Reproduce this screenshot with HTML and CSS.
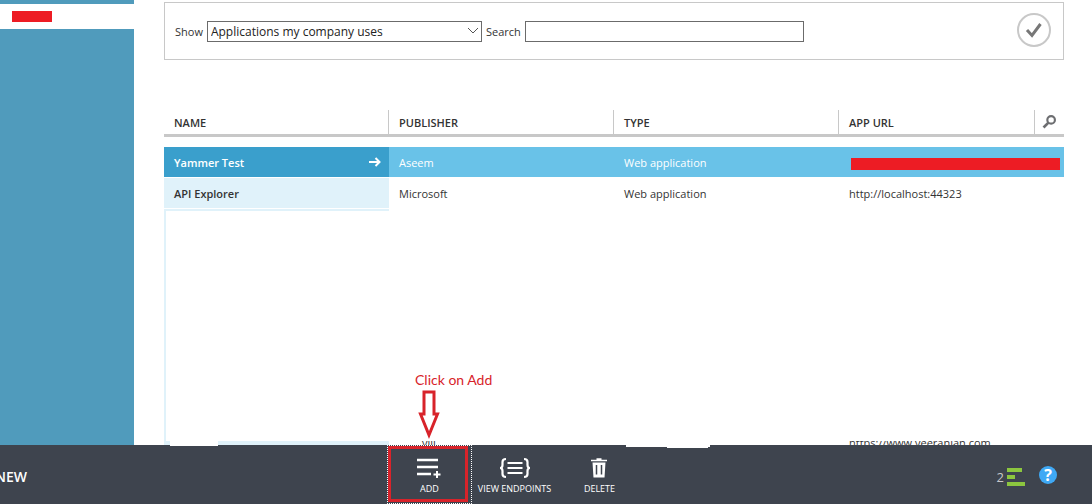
FILE: index.html
```html
<!DOCTYPE html>
<html lang="en">
<head>
  <meta charset="UTF-8">
  <title>Applications</title>
  <link rel="stylesheet" href="styles.css">
</head>
<body>
  <div class="workspace">
    <nav class="sidebar">
      <a href="#" class="sidebar-item" aria-label="Directory"><span class="redacted"></span></a>
    </nav>

    <main class="content">
      <form class="filter">
        <label for="show">Show</label>
        <div class="select-wrap">
          <select id="show">
            <option>Applications my company uses</option>
          </select>
          <svg class="chevron" viewBox="0 0 12 8"><path d="M1 1l5 5 5-5"/></svg>
        </div>
        <label for="search">Search</label>
        <input type="text" id="search">
        <button type="button" class="apply" aria-label="Apply">
          <svg viewBox="0 0 34 34">
            <circle cx="17" cy="17" r="16"/>
            <path d="M10 17l5 5.500 8.500-11.500"/>
          </svg>
        </button>
      </form>

      <table class="apps">
        <thead>
          <tr>
            <th>NAME</th>
            <th>PUBLISHER</th>
            <th>TYPE</th>
            <th>APP URL</th>
            <th class="find">
              <button type="button" aria-label="Find">
                <svg viewBox="0 0 12 12"><circle cx="7.500" cy="4.500" r="3.500"/><path d="M5 7l-4.500 4.500" stroke-width="2.500"/></svg>
              </button>
            </th>
          </tr>
        </thead>
        <tbody>
          <tr class="selected">
            <td class="name">
              <div class="name-cell">Yammer Test
                <svg viewBox="0 0 12 10"><path d="M0 5h11M6.500 1l4 4-4 4"/></svg>
              </div>
            </td>
            <td>Aseem</td>
            <td>Web application</td>
            <td colspan="2" class="url"><span class="redacted wide"></span></td>
          </tr>
          <tr>
            <td class="name">API Explorer</td>
            <td>Microsoft</td>
            <td>Web application</td>
            <td colspan="2">http://localhost:44323</td>
          </tr>
        </tbody>
      </table>

      <!-- blanked out rows -->
      <div class="blank"></div>
      <div class="last-row">
        <span class="last-name"></span>
        <span class="last-publisher">vill</span>
        <span></span>
        <span>https://www.veeranlan.com</span>
      </div>
    </main>
  </div>

  <footer class="drawer">
    <span class="patch patch-a"></span>
    <span class="patch patch-b"></span>
    <span class="patch patch-c"></span>

    <button type="button" class="new">NEW</button>

    <div class="commands">
      <button type="button" class="command focused">
        <svg viewBox="0 0 24 20">
          <path d="M-1 2h21M-1 9h21M-1 16h14" stroke-width="2.500"/>
          <path d="M15.500 16.500h7M19 13v7" stroke-width="2"/>
        </svg>
        ADD
      </button>
      <button type="button" class="command">
        <svg class="wide-icon" viewBox="0 0 32 20">
          <path d="M7 1q-3.500 0-3.500 3v3q0 3-2.500 3 2.500 0 2.500 3v3q0 3 3.500 3M25 1q3.500 0 3.500 3v3q0 3 2.500 3-2.500 0-2.500 3v3q0 3-3.500 3" stroke-width="2.200"/>
          <path d="M8.500 5h15M8.500 10h15M8.500 15h15" stroke-width="2"/>
        </svg>
        VIEW ENDPOINTS
      </button>
      <button type="button" class="command">
        <svg viewBox="0 0 24 20">
          <path d="M3 2.500h16M8.500 1h5" stroke-width="1.400"/>
          <path d="M4.500 4.500h13l-1 15h-11z" fill="#fff" stroke="none"/>
          <path d="M8.500 7v9.500M13.500 7v9.500" stroke="#3e444e" stroke-width="1.500"/>
        </svg>
        DELETE
      </button>

      <div class="callout">
        <span>Click on Add</span>
        <svg viewBox="0 0 20 48"><path d="M5 2h10v22h3.500L10 45 1.500 24H5z"/></svg>
      </div>
    </div>

    <div class="status">
      <span class="count">2</span>
      <svg class="bars" viewBox="0 0 18 18"><path d="M0 0h15v4H0zM0 7h8v4H0zM0 14h18v4H0z"/></svg>
      <button type="button" class="help" aria-label="Help">?</button>
    </div>
  </footer>
</body>
</html>
```

FILE: styles.css
```css
* { box-sizing: border-box; }
body, html {
  height: 100%;
  margin: 0;
}
body {
  display: flex;
  flex-direction: column;
  overflow: hidden;
  background: #fff;
  color: #333;
  font-family: "Open Sans", "Noto Sans", sans-serif;
  font-size: 11px;
}
button {
  padding: 0;
  border: 0;
  background: none;
  font: inherit;
  color: inherit;
}
svg {
  fill: none;
  stroke: currentColor;
  overflow: visible;
}

.workspace {
  display: flex;
  flex: 1;
  min-height: 0;
}
.sidebar {
  width: 134px;
  padding-top: 4px;
  background: #509bbc;
}
.sidebar-item {
  display: flex;
  align-items: center;
  height: 25px;
  padding-left: 12px;
  background: #fff;
}
.redacted {
  width: 40px;
  height: 11px;
  background: #ed1c24;
}
.content {
  display: flex;
  flex: 1;
  flex-direction: column;
  padding: 2px 28px 0 30px;
}

/* filter bar */
.filter {
  display: flex;
  align-items: center;
  gap: 4px;
  height: 58px;
  padding: 0 12px 0 10px;
  border: 1px solid #c8c8c8;
}
.select-wrap {
  position: relative;
  width: 275px;
}
.filter select,
.filter input {
  display: block;
  height: 21px;
  border: 1px solid #6b6b6b;
  border-radius: 0;
  background: #fff;
  color: #222;
  font-family: inherit;
  font-size: 12px;
}
.filter select {
  width: 100%;
  padding: 0 3px;
  appearance: none;
}
.filter input { width: 279px; }
.chevron {
  position: absolute;
  top: 6px;
  right: 3px;
  width: 12px;
  height: 8px;
  color: #555;
}
.apply {
  width: 34px;
  height: 34px;
  margin: -2px 0 0 auto;
}
.apply svg { display: block; }
.apply circle {
  stroke: #c8c8c8;
  stroke-width: 2;
}
.apply path {
  stroke: #777;
  stroke-width: 3;
}

/* applications */
.apps {
  width: 100%;
  margin-top: 50px;
  border-spacing: 0;
  table-layout: fixed;
}
.apps th {
  height: 27px;
  padding: 0 10px;
  border-right: 1px solid #c8c8c8;
  border-bottom: 3px solid #c8c8c8;
  text-align: left;
  font-weight: 600;
}
.apps th:nth-child(-n+3) { width: 25%; }
.apps .find {
  width: 29px;
  padding: 2px 0 0 8px;
  border-right: 0;
}
.find svg {
  display: block;
  width: 13px;
  height: 13px;
  color: #6d6e71;
  stroke-width: 2;
}
.apps tbody::before {
  content: "";
  display: block;
  height: 10px;
}
.apps td {
  height: 31px;
  padding: 0 10px;
  border-bottom: 1px solid #fff;
  background-clip: padding-box;
}
.apps .name {
  background-color: #e0f2fa;
  font-weight: 600;
}
.selected td {
  background-color: #69c2e8;
  color: #fff;
}
.apps .selected .name { background-color: #3a9fcc; }
.name-cell {
  display: flex;
  align-items: center;
  justify-content: space-between;
}
.name-cell svg {
  width: 12px;
  height: 10px;
  margin-right: -2px;
  stroke-width: 2;
}
.apps .url { padding: 3px 4px 0 12px; }
.redacted.wide {
  display: block;
  width: 100%;
  height: 12px;
}
.blank {
  flex: 1;
  width: 25%;
  border-top: 2px solid #e0f2fa;
  border-left: 2px solid #e0f2fa;
}
.last-row {
  display: grid;
  grid-template: 4px / repeat(4, 1fr);
  height: 4px;
  overflow: hidden;
  line-height: 4px;
}
.last-row span { padding-left: 10px; }
.last-row .last-name { background: #e0f2fa; }
.last-row .last-publisher { padding-left: 33px; }

/* command bar */
.drawer {
  position: relative;
  display: grid;
  grid-template-columns: 387px auto 1fr;
  align-items: center;
  height: 59px;
  background: #3e444e;
  color: #fff;
}
.new {
  justify-self: start;
  margin-left: -5px;
  padding-top: 4px;
  font-size: 14px;
  font-weight: 600;
}
.commands {
  position: relative;
  display: flex;
  height: 100%;
}
.command {
  display: flex;
  flex-direction: column;
  align-items: center;
  gap: 4px;
  width: 85px;
  padding-top: 13px;
  font-size: 9px;
  line-height: 14px;
  white-space: nowrap;
}
.command svg {
  width: 24px;
  height: 20px;
}
.command .wide-icon { width: 32px; }
.focused {
  position: relative;
  outline: 1px dotted #fff;
  outline-offset: -1px;
}
.focused::after {
  content: "";
  position: absolute;
  inset: 1px 4px 2px 1px;
  border: 3px solid #d8232a;
}
.callout {
  position: absolute;
  bottom: 100%;
  left: 28px;
  padding-bottom: 7px;
  color: #d8232a;
  font-family: Lato, sans-serif;
  font-size: 14px;
  line-height: 20px;
  white-space: nowrap;
}
.callout svg {
  display: block;
  width: 20px;
  height: 48px;
  margin-left: 4px;
  stroke-width: 3;
}
.status {
  display: flex;
  align-items: center;
  justify-content: flex-end;
  gap: 3px;
  padding-right: 35px;
}
.count {
  padding-top: 4px;
  color: #c8c8c8;
  font-size: 13px;
}
.bars {
  width: 18px;
  height: 18px;
  margin-top: 4px;
  fill: #8cc63f;
  stroke: none;
}
.help {
  width: 18px;
  height: 18px;
  margin-left: 11px;
  border-radius: 50%;
  background: #3fa9f5;
  font-size: 16px;
  font-weight: 700;
  line-height: 18px;
}
.patch {
  position: absolute;
  top: 0;
  background: #fff;
}
.patch-a {
  top: -4px;
  left: 170px;
  width: 48px;
  height: 5px;
}
.patch-b {
  left: 626px;
  width: 84px;
  height: 2px;
}
.patch-c {
  left: 667px;
  width: 41px;
  height: 3px;
}
```
